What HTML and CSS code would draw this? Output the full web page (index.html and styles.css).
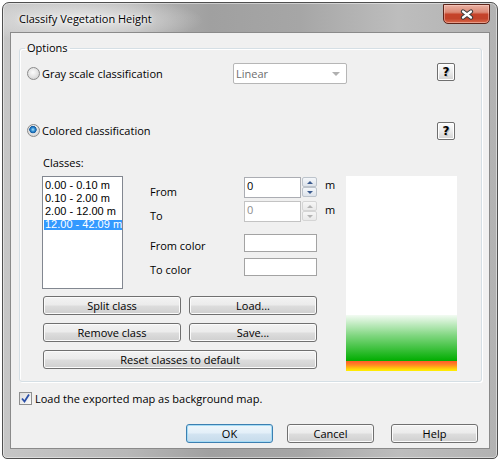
FILE: index.html
```html
<!DOCTYPE html>
<html>
<head>
<meta charset="utf-8">
<title>Classify Vegetation Height</title>
<link rel="stylesheet" href="styles.css">
</head>
<body>
<div class="window">
  <div class="titlebar">
    <span class="title">Classify Vegetation Height</span>
    <div class="close">
      <svg width="14" height="11" viewBox="0 0 14 11">
        <path d="M3 2.5 L11 8.5 M11 2.5 L3 8.5" stroke="#3b3b3b" stroke-width="4.2" stroke-linecap="round" fill="none"/>
        <path d="M3 2.5 L11 8.5 M11 2.5 L3 8.5" stroke="#ffffff" stroke-width="2.2" stroke-linecap="round" fill="none"/>
      </svg>
    </div>
  </div>
  <div class="client">
    <fieldset class="group">
      <legend>Options</legend>
      <div class="row row-gray">
        <label class="radio"><span class="radio-dot"></span>Gray scale classification</label>
        <div class="combo"><span>Linear</span><span class="combo-arrow"></span></div>
        <button class="help">?</button>
      </div>
      <div class="row row-colored">
        <label class="radio radio-short"><span class="radio-dot checked"></span>Colored classification</label>
        <button class="help help-2">?</button>
      </div>
      <div class="classes-label">Classes:</div>
      <div class="classes">
        <div class="left">
          <div class="top">
            <ul class="list">
              <li>0.00 - 0.10 m</li>
              <li>0.10 - 2.00 m</li>
              <li>2.00 - 12.00 m</li>
              <li class="sel">12.00 - 42.09 m</li>
            </ul>
            <div class="form">
              <div class="frow">
                <span class="flabel">From</span>
                <div class="num">0</div>
                <div class="spin">
                  <span class="sbtn"><span class="tri up"></span></span>
                  <span class="sbtn"><span class="tri down"></span></span>
                </div>
                <span class="unit">m</span>
              </div>
              <div class="frow frow-to">
                <span class="flabel">To</span>
                <div class="num disabled">0</div>
                <div class="spin disabled">
                  <span class="sbtn"><span class="tri up"></span></span>
                  <span class="sbtn"><span class="tri down"></span></span>
                </div>
                <span class="unit">m</span>
              </div>
              <div class="frow frow-color1">
                <span class="flabel flabel-c">From color</span>
                <div class="colorbox"></div>
              </div>
              <div class="frow frow-color2">
                <span class="flabel flabel-c">To color</span>
                <div class="colorbox"></div>
              </div>
            </div>
          </div>
          <div class="btns">
            <button class="btn">Split class</button>
            <button class="btn">Load...</button>
            <button class="btn">Remove class</button>
            <button class="btn">Save...</button>
            <button class="btn wide">Reset classes to default</button>
          </div>
        </div>
        <div class="preview">
          <div class="pv-white"></div>
          <div class="pv-green"></div>
          <div class="pv-orange"></div>
        </div>
      </div>
    </fieldset>
    <label class="check">
      <span class="cbox">
        <svg width="11" height="11" viewBox="0 0 11 11"><path d="M2 5.5 L4.5 8.5 L9 1.5" stroke="#2a4fa8" stroke-width="1.8" fill="none"/></svg>
      </span>
      Load the exported map as background map.
    </label>
    <div class="footer">
      <button class="btn fbtn ok">OK</button>
      <button class="btn fbtn cancel">Cancel</button>
      <button class="btn fbtn helpbtn">Help</button>
    </div>
  </div>
</div>
</body>
</html>
```
FILE: styles.css
```css
* { box-sizing: border-box; }
html, body { margin: 0; padding: 0; }
body {
  background: #ffffff;
  width: 500px;
  height: 463px;
  overflow: hidden;
  font-family: "Open Sans", "Noto Sans", sans-serif;
  font-size: 11px;
  color: #000;
}
.window {
  margin: 2px 0 0 2px;
  width: 496px;
  height: 457px;
  border: 1px solid #4f4f4f;
  border-radius: 7px 7px 5px 5px;
  padding: 0 7px 9px;
  display: flex;
  flex-direction: column;
  background:
    radial-gradient(ellipse 120px 24px at 80px 17px, rgba(235,235,235,0.95), rgba(235,235,235,0) 100%),
    linear-gradient(90deg, #c6c6c6 0%, #b8b8b8 25%, #a0a0a0 42%, #a6a6a6 60%, #bdbdbd 80%, #b2b2b2 100%);
  box-shadow: inset 0 0 0 1px rgba(255,255,255,0.45);
}
.titlebar {
  height: 29px;
  display: flex;
  justify-content: space-between;
  align-items: flex-start;
  padding-left: 9px;
}
.title {
  font-size: 11px;
  line-height: 16px;
  margin-top: 8px;
  text-shadow: 0 0 6px #fff, 0 0 3px #fff;
}
.close {
  width: 47px;
  height: 20px;
  margin-top: 1px;
  border: 1px solid #5e2419;
  border-radius: 0 0 5px 5px;
  background: linear-gradient(#eab0a2 0%, #dc8a76 40%, #c5432a 52%, #c2432a 75%, #d9684a 100%);
  box-shadow: inset 0 0 0 1px rgba(255,220,210,0.45);
  display: flex;
  align-items: center;
  justify-content: center;
}
.client {
  flex: 1;
  border: 1px solid #8a8a8a;
  background: #f0f0f0;
  display: flex;
  flex-direction: column;
}
.group {
  margin: 7px 7px 0 8px;
  padding: 0 0 10px 0;
  border: 1px solid #d5dfe5;
  border-radius: 3px;
  min-width: 0;
  box-shadow: inset 1px 1px 0 #fff, 1px 1px 0 #fff;
}
.group legend {
  padding: 0 2px;
  margin-left: 5px;
  line-height: 16px;
}
.row {
  display: flex;
  align-items: flex-start;
  padding-left: 7px;
}
.row-gray { margin-top: 7px; height: 21px; }
.row-colored { margin-top: 38px; height: 18px; }
.radio {
  display: flex;
  align-items: center;
  width: 206px;
  height: 21px;
}
.radio-short { height: 17px; width: 410px; }
.radio-dot {
  width: 13px;
  height: 13px;
  border-radius: 50%;
  border: 1px solid #8b8b8b;
  margin-right: 2px;
  flex: none;
  background: radial-gradient(circle at 45% 40%, #fbfbfb 0%, #e6e6e6 45%, #c8c8c8 100%);
}
.radio-dot.checked {
  background:
    radial-gradient(circle at 45% 42%, #a9e3fb 0px, #2f8ad0 2px, #135a9e 3.4px, rgba(19,90,158,0) 4px),
    radial-gradient(circle at 45% 40%, #fbfbfb 0%, #e6e6e6 45%, #c8c8c8 100%);
}
.combo {
  width: 114px;
  height: 21px;
  border: 1px solid #b6b6b6;
  border-radius: 2px;
  background: #fff;
  color: #6d6d6d;
  display: flex;
  align-items: center;
  justify-content: space-between;
  padding: 0 6px 0 2px;
  line-height: 15px;
}
.combo-arrow {
  width: 0;
  height: 0;
  border-left: 4px solid transparent;
  border-right: 4px solid transparent;
  border-top: 4px solid #b0b0b0;
}
.help {
  width: 18px;
  height: 18px;
  margin-left: 90px;
  padding: 0;
  border: 1px solid #6f6f6f;
  border-radius: 2px;
  background: linear-gradient(#fdfdfd 0%, #ececec 50%, #d2d2d2 100%);
  box-shadow: inset 0 0 0 1px #fff;
  font-family: "DejaVu Sans", sans-serif;
  font-weight: bold;
  font-size: 12px;
  line-height: 15px;
  color: #000;
  text-shadow: 1px 1px 0 #bdbdbd;
}
.help-2 { margin-left: 0; }
.classes-label {
  margin-top: 15px;
  padding-left: 23px;
  line-height: 16px;
}
.classes {
  display: flex;
  margin-top: 5px;
  padding-left: 22px;
}
.left { width: 280px; flex: none; }
.top { display: flex; align-items: flex-start; }
.list {
  list-style: none;
  margin: 0;
  padding: 2px 0 0 1px;
  width: 81px;
  height: 113px;
  flex: none;
  border: 1px solid #828790;
  background: #fff;
}
.list li {
  height: 13px;
  line-height: 13px;
  padding-left: 1px;
  font-family: "Liberation Sans", Arial, sans-serif;
  font-size: 11px;
  white-space: nowrap;
  overflow: hidden;
}
.list li.sel {
  color: #fff;
  background: linear-gradient(transparent 2px, #3399ff 2px, #3399ff 12px, transparent 12px);
}
.form {
  margin-left: 27px;
  margin-top: 1px;
  flex: none;
}
.frow { display: flex; align-items: flex-start; }
.frow-to { margin-top: 3px; }
.frow-color1 { margin-top: 12px; }
.frow-color2 { margin-top: 6px; }
.flabel {
  width: 94px;
  height: 21px;
  line-height: 13px;
  padding-top: 8px;
}
.flabel-c { height: 18px; padding-top: 5px; }
.num {
  width: 57px;
  height: 21px;
  border: 1px solid #abadb3;
  background: #fff;
  padding-left: 2px;
  line-height: 15px;
}
.num.disabled { color: #8d8d8d; border-color: #c3c3c3; }
.spin {
  width: 15px;
  margin-left: 1px;
  display: flex;
  flex-direction: column;
}
.sbtn {
  height: 10px;
  border: 1px solid #bcc3cb;
  border-radius: 2px;
  background: linear-gradient(#f4f7fa, #dde3ea);
  display: flex;
  align-items: center;
  justify-content: center;
}
.tri { width: 0; height: 0; border-left: 3px solid transparent; border-right: 3px solid transparent; }
.tri.up { border-bottom: 3px solid #3b5a8e; }
.tri.down { border-top: 3px solid #3b5a8e; }
.spin.disabled .sbtn { border-color: #d5d5d5; background: linear-gradient(#f6f6f6, #e9e9e9); }
.spin.disabled .tri.up { border-bottom-color: #b4b4b4; }
.spin.disabled .tri.down { border-top-color: #b4b4b4; }
.unit { margin-left: 8px; margin-top: 1px; line-height: 14px; }
.frow-to .unit { margin-top: 2px; }
.colorbox {
  width: 73px;
  height: 18px;
  border: 1px solid #a3a3a3;
  background: #fff;
}
.btns {
  display: grid;
  grid-template-columns: 138px 128px;
  gap: 8px;
  margin: 7px 0 0 1px;
}
.btn {
  height: 19px;
  padding: 0;
  border: 1px solid #707070;
  border-radius: 3px;
  background: linear-gradient(#f3f3f3 0%, #ebebeb 48%, #dddddd 52%, #cfcfcf 100%);
  box-shadow: inset 0 0 0 1px #fbfbfb;
  font-family: inherit;
  font-size: 11px;
  line-height: 15px;
  color: #000;
}
.btn.wide { grid-column: 1 / 3; }
.preview {
  width: 111px;
  height: 195px;
  margin-left: 24px;
  flex: none;
  display: flex;
  flex-direction: column;
}
.pv-white { height: 139px; background: #fff; }
.pv-green { height: 46px; background: linear-gradient(#f3fbf3 0%, #7fd67f 45%, #00ad00 100%); }
.pv-orange { height: 10px; background: linear-gradient(#ff5b2a 0%, #ff8a22 40%, #ffc010 70%, #fff200 100%); }
.check {
  display: flex;
  align-items: center;
  height: 13px;
  margin: 10px 0 0 8px;
}
.cbox {
  width: 13px;
  height: 13px;
  margin-right: 3px;
  border: 1px solid #8e8f8f;
  background: linear-gradient(135deg, #dcdcdc, #fbfbfb);
  display: flex;
  align-items: center;
  justify-content: center;
}
.footer {
  display: flex;
  margin-top: 19px;
}
.fbtn { width: 87px; }
.ok {
  margin-left: 175px;
  border-color: #3c7fb1;
  box-shadow: inset 0 0 0 1px #a6dcf5;
  background: linear-gradient(#eef6fb 0%, #e3eff8 48%, #d3e4f1 52%, #c6dbeb 100%);
}
.cancel { margin-left: 14px; }
.helpbtn { margin-left: 17px; }
```
